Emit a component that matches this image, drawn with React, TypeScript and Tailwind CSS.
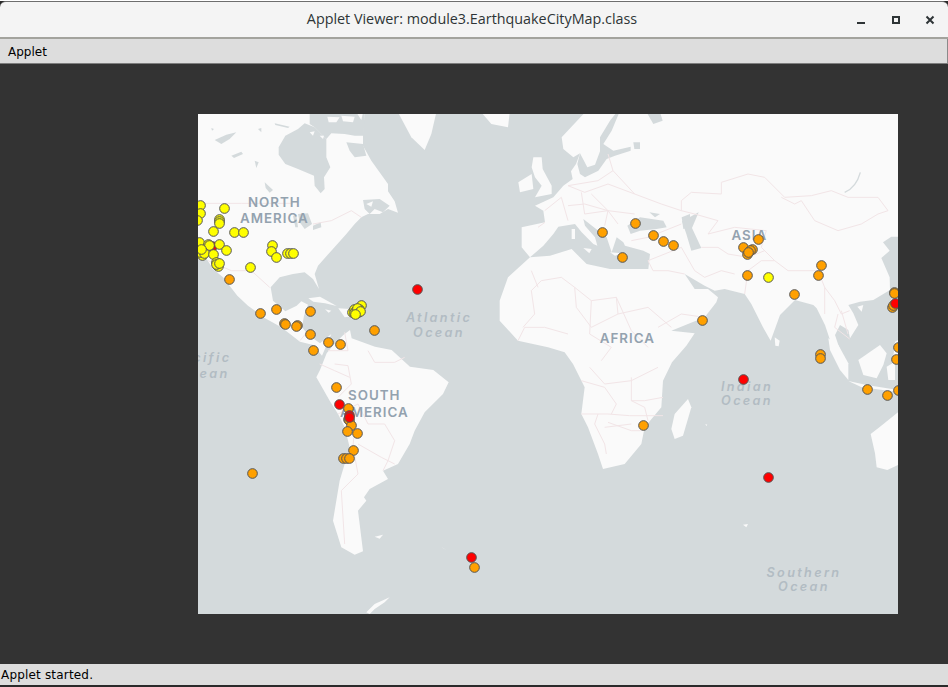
const WATER = "#d4dadc";
const LAND = "#fafafa";
const BORDER = "#f2e5e7";

const naLand = "-5,-5 500,-5 495,60 495,95 520,140 570,210 570,232 590,262 600,296 570,285 545,300 510,300 490,310 470,330 445,360 400,410 360,455 350,480 363,525 345,495 320,475 285,480 245,490 218,520 225,560 262,592 296,575 310,562 330,572 318,605 312,640 331,663 366,688 400,660 372,725 346,693 306,683 250,640 200,612 150,575 118,545 75,490 45,465 20,425 -5,395";
const landN = [
  "600,-5 640,70 680,108 700,60 715,-5",
  "850,-5 880,30 930,40 935,-5",
  "331,553 366,548 416,576 381,568 346,563",
  "421,583 456,585 478,605 440,610",
  "381,586 400,590 392,596",
];
const naWater = [
  "242,100 262,65 300,45 320,28 350,40 385,75 385,130 397,160 378,190 380,225 368,238 350,215 348,185 300,165 262,150 242,122",
  "335,-5 500,-5 497,65 470,65 440,60 400,58 385,75 350,40 335,30",
  "445,85 495,90 505,125 470,130 455,110",
  "495,258 545,255 575,275 555,295 530,285 515,300 500,285",
  "300,300 330,298 342,330 320,345 305,325",
  "285,305 295,302 300,340 292,340",
  "345,335 368,325 370,340 345,348",
  "200,205 225,228 215,236 203,222",
  "50,78 85,62 115,55 95,75 70,90",
  "100,125 130,113 135,120 108,132",
  "170,140 182,145 175,162",
  "180,45 190,42 190,55",
  "40,42 48,45 42,50",
  "230,28 275,38 270,42 232,33",
];
const naIslands = [
  "388,8 425,10 415,25 392,25",
  "430,5 470,8 465,25 435,22",
  "475,-5 495,-5 490,18",
  "335,55 350,52 345,65",
  "365,65 378,65 375,75",
  "505,270 525,262 520,278",
];
const eurasia = "111,-5 1060,-5 1060,368 1030,368 1005,385 1025,410 1000,432 1025,490 1026,528 976,558 936,563 901,573 916,598 931,633 906,673 901,648 876,633 861,663 871,693 891,743 866,718 846,678 831,633 806,583 796,573 741,558 696,603 668,680 645,640 610,570 590,540 530,525 500,530 470,515 410,480 440,525 480,525 510,550 505,565 470,610 370,650 440,658 415,695 372,745 345,800 340,880 290,940 280,990 230,1050 165,1065 150,1020 120,940 100,900 110,820 75,750 50,715 0,700 -90,680 -145,620 -145,560 -120,490 -54,430 -79,400 -79,340 -9,325 -14,290 -39,275 16,250 46,215 74,195 69,172 84,150 96,118 76,130 46,105 41,70";
const eurSeas = [
  "90,430 130,395 160,360 175,338 225,330 245,355 280,390 292,395 285,370 255,335 250,315 295,350 320,370 335,415 350,370 370,385 375,395 430,410 450,420 445,465 330,465 260,450 235,425 215,405 150,425",
  "382,335 420,310 490,320 500,340 470,345 420,350 392,360",
  "448,295 480,300 465,310",
  "240,118 262,160 285,152 300,112 300,70 330,20 350,-5 358,-5 335,50 310,90 340,110 392,98 392,110 345,125 320,135 295,170 255,190 240,180 232,150",
  "400,85 420,85 420,105 403,105",
  "440,-5 480,-5 488,20 460,30",
  "545,310 570,300 570,340 550,345",
];
const eurLand = [
  "100,130 125,130 128,165 155,215 155,240 105,250 125,215 105,190 95,160",
  "55,205 95,180 100,225 60,235",
  "250,402 275,405 268,418",
  "215,345 225,345 225,375 215,375",
  "330,415 365,418 345,425",
];
const caspian = "402,322 452,295 432,342 460,402 430,410 415,360";
const seLand = [
  "145,265 175,285 205,340 205,390 180,360 150,300",
  "205,393 260,405 354,420 354,426 245,412",
  "235,330 300,285 320,310 310,345 290,385 250,375",
  "320,350 345,335 345,390 325,390",
  "345,275 354,270 354,345 340,320",
  "232,170 250,165 245,185",
  "272,552 300,530 354,487 354,645 322,660 290,652 285,610",
];
const otherLand = [
  "680,670 695,680 692,697 682,695",
  "420,855 430,880 405,965 380,975 370,945 380,900",
  "1030,555 1042,545 1040,575",
  "585,1232 600,1230 595,1240",
  "472,930 478,932 475,936",
];
const borders: string[] = [
  "-75,640 -40,600 -50,530 -20,500 40,490 80,520 130,560 205,550 210,600",
  "80,520 85,580 130,640 210,600 300,580 370,640",
  "130,560 125,660 190,700 160,740",
  "205,550 250,650 300,700",
  "-90,680 -70,640 -10,640 60,660",
  "-30,520 -50,470",
  "520,205 600,180 650,190 710,250 790,245 850,230 900,250 990,250 1020,290 990,300 940,330 870,350 800,320 760,260 740,270 700,250",
  "400,260 430,235 520,240 520,205",
  "400,260 400,290 440,300 510,320 480,360 560,340 655,350",
  "655,350 640,400 680,440 640,440 600,470 590,540",
  "460,400 510,400 540,420 600,430 650,410",
  "300,440 400,400 440,470 470,490 520,470 560,480",
  "680,440 720,470 810,470 830,520 830,600",
  "830,520 860,560 880,600 905,590",
  "870,600 860,640 905,675",
  "60,215 110,235 180,210 260,240 340,270 400,290",
  "100,235 110,300 180,290 260,300",
  "40,250 60,320",
  "130,240 180,290 170,335",
  "400,330 300,370 250,380",
  "300,440 315,470 360,470 410,480",
  "330,640 400,600 470,610",
  "180,120 195,170 150,200 60,215",
  "195,170 260,240",
  "60,275 110,270 180,290 210,330",
  "-10,290 40,250",
  "-30,340 -9,325",
  "880,590 900,660",
];
const bordersS: string[] = [
  "100,150 180,150 245,155 345,155",
  "100,50 170,70 205,120 190,150",
  "150,150 140,180 170,240 175,270",
  "180,175 250,200 280,200",
  "170,190 250,180",
  "250,40 250,110 290,110 345,100",
  "250,110 290,130 300,170",
  "125,10 170,60 250,50 330,10",
];
const naBorders = [
  "-5,268 130,268 285,268",
  "345,330 400,320 460,290 490,310",
  "30,440 100,470 160,470 215,520",
  "306,680 330,650",
];
const saBorders = [
  "365,0 410,20 455,40",
  "410,0 450,5 460,60 420,100",
  "420,150 480,120 510,180 560,180 590,230 570,290 555,320",
  "470,180 465,250 480,330 430,380 440,540",
  "480,240 550,280 590,300",
  "510,-40 530,-5 590,-5 620,-20",
  "440,-95 450,-40 390,-40",
];
const sa = "366,18 386,-32 406,-57 436,-87 456,-102 461,-77 531,-52 581,-42 636,8 706,18 752,55 735,90 680,145 650,200 635,240 600,300 555,320 570,345 515,375 498,400 505,410 480,440 495,562 470,572 430,550 405,470 425,350 455,250 440,190 420,150 395,110 355,40";
const saBits = [
  "530,518 555,512 545,524",
  "730,550 745,558 735,552",
  "505,745 530,720 575,700 560,715 530,735 515,750",
];

const orange: [number, number][] = [
  [93,497],[186,597],[234,585],[336,593],[258,627],[263,630],[298,633],[296,638],[336,660],[390,684],[426,690],[345,708],[528,648],
  [1214,356],[1313,329],[1367,365],[1397,383],[1427,393],[1272,429],[1635,401],[1662,405],[1680,377],[1647,420],[1658,409],[1652,414],[1647,485],[1790,542],[1860,485],[1869,453],[1514,620],[2088,535],[2090,537],[2082,581],[2086,575],[2100,700],[2095,735],[1866,722],[1868,733],
  [414,821],[450,883],[450,915],[455,918],[460,933],[447,951],[479,959],[467,1010],[435,1032],[446,1032],[455,1032],[162,1077],[828,1359],
  [1335,935],[2007,827],[2067,845],[2100,830],
];
const yellow: [number, number][] = [
  [8,275],[8,297],[78,282],[65,317],[63,323],[63,327],[47,353],[110,356],[135,356],[-2,318],[3,384],[30,392],[33,393],[65,392],[84,408],[14,423],[14,411],[8,414],[20,417],[11,405],[47,420],[55,445],[57,455],[60,458],[54,452],[63,449],[157,461],[222,393],[219,413],[234,429],[268,417],[278,417],[287,417],
  [490,575],[464,594],[470,585],[478,590],[485,585],[475,597],[472,592],[481,596],[468,597],[478,582],[487,591],[472,600],[1710,491],
];
const red: [number, number][] = [
  [657,527],[2092,568],[423,872],[455,905],[819,1331],[453,910],[1635,795],[1710,1089],
];

function Marker({ x, y, fill }: { x: number; y: number; fill: string }) {
  const cx = Math.round((x - 1.5) / 3) * 3 + 1.5;
  const cy = Math.round((y - 1.5) / 3) * 3 + 1.5;
  return <circle cx={cx} cy={cy} r="14.5" fill={fill} />;
}

function WorldMap() {
  return (
    <svg viewBox="0 0 2100 1500" className="block w-[700px] h-[500px]">
      <rect width="2100" height="1500" fill={WATER} />
      <polygon points={naLand} fill={LAND} />
      {naWater.map((p, i) => <polygon key={i} points={p} fill={WATER} />)}
      {naIslands.map((p, i) => <polygon key={i} points={p} fill={LAND} />)}
      {landN.map((p, i) => <polygon key={i} points={p} fill={LAND} />)}
      {naBorders.map((p, i) => <polyline key={i} points={p} fill="none" stroke={BORDER} strokeWidth="3" />)}
      <g transform="translate(1050,0)">
        <polygon points={eurasia} fill={LAND} />
        <polygon points={caspian} fill={WATER} />
        <g transform="translate(-144,0)">
          {eurSeas.map((p, i) => <polygon key={i} points={p} fill={WATER} />)}
          {eurLand.map((p, i) => <polygon key={i} points={p} fill={LAND} />)}
        </g>
        {borders.map((p, i) => <polyline key={i} points={p} fill="none" stroke={BORDER} strokeWidth="3" />)}
        <g transform="translate(0,750)">
          {bordersS.map((p, i) => <polyline key={i} points={p} fill="none" stroke={BORDER} strokeWidth="3" />)}
        </g>
        {otherLand.map((p, i) => <polygon key={i} points={p} fill={LAND} />)}
        <g transform="translate(696,408)">
          {seLand.map((p, i) => <polygon key={i} points={p} fill={LAND} />)}
        </g>
        <path d="M890,235 Q925,220 937,175" fill="none" stroke={WATER} strokeWidth="4" />
      </g>
      <g transform="translate(0,750)">
        <polygon points={sa} fill={LAND} />
        {saBits.map((p, i) => <polygon key={i} points={p} fill={LAND} />)}
        {saBorders.map((p, i) => <polyline key={i} points={p} fill="none" stroke={BORDER} strokeWidth="3" />)}
      </g>
      <g fontFamily="Inter, 'Open Sans', sans-serif" fontWeight="600" fill="#93a2af" fontSize="40" textAnchor="middle" letterSpacing="3">
        <text x="229" y="278">NORTH</text>
        <text x="229" y="328">AMERICA</text>
        <text x="1654" y="377">ASIA</text>
        <text x="1288" y="686">AFRICA</text>
        <text x="529" y="858">SOUTH</text>
        <text x="529" y="909">AMERICA</text>
      </g>
      <g fontFamily="Inter, 'Open Sans', sans-serif" fontStyle="italic" fontWeight="600" fill="#b2bcc3" fontSize="38" textAnchor="middle" letterSpacing="7">
        <text x="723" y="625">Atlantic</text>
        <text x="723" y="670">Ocean</text>
        <text x="1647" y="830">Indian</text>
        <text x="1647" y="874">Ocean</text>
        <text x="1818" y="1388">Southern</text>
        <text x="1818" y="1432">Ocean</text>
        <text x="100" y="745" textAnchor="end">Pacific</text>
        <text x="95" y="792" textAnchor="end">Ocean</text>
      </g>
      <g stroke="#555555" strokeWidth="3">
        <Marker x={42} y={397} fill="#ff0000" />
        {yellow.map(([x, y], i) => <Marker key={i} x={x} y={y} fill="#ffff00" />)}
        {orange.map(([x, y], i) => <Marker key={i} x={x} y={y} fill="#ffa000" />)}
        {red.map(([x, y], i) => <Marker key={i} x={x} y={y} fill="#ff0000" />)}
      </g>
    </svg>
  );
}

export default function App() {
  return (
    <div className="w-[948px] h-[687px] flex flex-col overflow-hidden bg-[#2a2a2a] font-['DejaVu_Sans',sans-serif]">
      <div className="h-[1px] shrink-0 bg-white" />
      <div className="h-[38px] shrink-0 flex items-center relative bg-[#f4f4f4] rounded-t-[6px] border-t border-t-[#6e6e6e] border-b-2 border-b-[#a3a39d] text-[#2e3436]">
        <div className="flex-1 text-center pr-[4px] font-['Open_Sans',sans-serif] font-medium text-[14.35px] leading-none">
          Applet Viewer: module3.EarthquakeCityMap.class
        </div>
        <div className="absolute right-[13px] top-[11px] flex items-center gap-[22px]">
          <svg width="12" height="12" viewBox="0 0 12 12">
            <rect x="2" y="9" width="8" height="2" fill="#2e3436" />
          </svg>
          <svg width="12" height="12" viewBox="0 0 12 12">
            <rect x="4" y="4" width="6" height="6" fill="none" stroke="#2e3436" strokeWidth="2" />
          </svg>
          <svg width="12" height="12" viewBox="0 0 12 12">
            <path d="M3.5 3.5 L10.5 10.5 M10.5 3.5 L3.5 10.5" stroke="#2e3436" strokeWidth="2" />
          </svg>
        </div>
      </div>
      <div className="h-[25px] shrink-0 flex items-center bg-[#dddddd] border-b border-b-[#7d7d7d] border-r border-r-[#8a8a8a] pl-[8px] pt-[1px] text-[12px] text-black">
        Applet
      </div>
      <div className="flex-1 bg-[#333333] pl-[198px] pt-[50px]">
        <WorldMap />
      </div>
      <div className="h-[21px] shrink-0 flex items-center bg-[#dddddd] pl-[1px] text-[12px] tracking-[0.18px] text-black">
        Applet started.
      </div>
      <div className="h-[2px] shrink-0 bg-[#2a2a2a]" />
    </div>
  );
}
